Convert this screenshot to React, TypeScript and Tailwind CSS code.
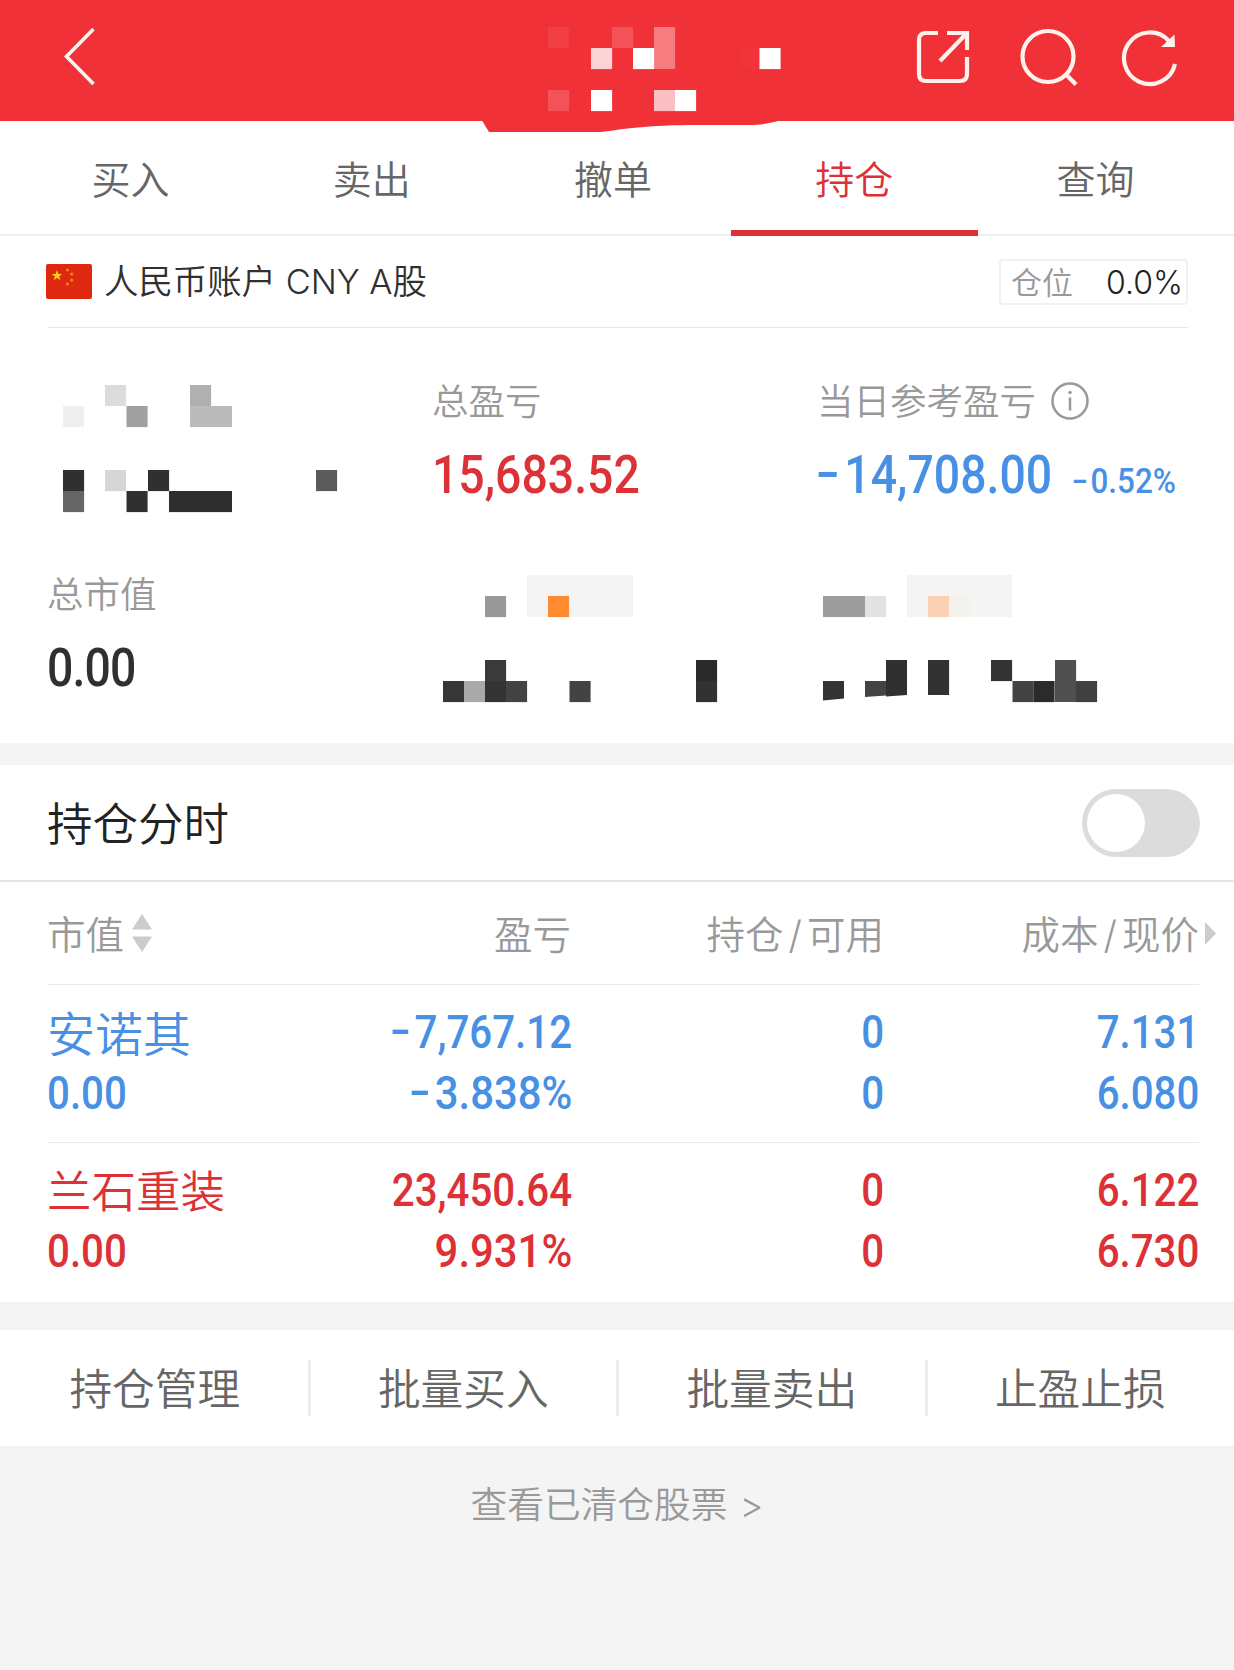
import { useState } from "react";
import clsx from "clsx";

type Tone = "red" | "blue";

interface Holding {
    name: string;
    nameClass: string;
    value: string;
    profit: string;
    profitRate: string;
    amount: string;
    available: string;
    cost: string;
    price: string;
    tone: Tone;
}

interface Cell {
    x: number;
    y: number;
    w?: number;
    h?: number;
    fill: string;
}

const TONES: Record<Tone, string> = {
    red: "text-[#dc3136]",
    blue: "text-[#4790e4]",
};

const TABS = ["买入", "卖出", "撤单", "持仓", "查询"];
const ACTIONS = ["持仓管理", "批量买入", "批量卖出", "止盈止损"];

const HOLDINGS: Holding[] = [
    {
        name: "安诺其",
        nameClass: "text-[48px]",
        value: "0.00",
        profit: "-7,767.12",
        profitRate: "-3.838%",
        amount: "0",
        available: "0",
        cost: "7.131",
        price: "6.080",
        tone: "blue",
    },
    {
        name: "兰石重装",
        nameClass: "text-[44.5px]",
        value: "0.00",
        profit: "23,450.64",
        profitRate: "9.931%",
        amount: "0",
        available: "0",
        cost: "6.122",
        price: "6.730",
        tone: "red",
    },
];

// Masked values are drawn as blocks of this size
const BLOCK = 21.1;

const TITLE_MASK: Cell[] = [
    { x: 66, y: 27, fill: "#f13f44" },
    { x: 130, y: 27, fill: "#f35358" },
    { x: 172, y: 27, h: 42, fill: "#f67c80" },
    { x: 109, y: 48, fill: "#fcd3d5" },
    { x: 151, y: 48, fill: "#ffffff" },
    { x: 257, y: 48, fill: "#f03439" },
    { x: 277.5, y: 48, fill: "#ffffff" },
    { x: 66, y: 90, fill: "#f35358" },
    { x: 109, y: 90, fill: "#ffffff" },
    { x: 172, y: 90, fill: "#fabfc3" },
    { x: 193, y: 90, fill: "#ffffff" },
];

const ASSET_MASK: Cell[] = [
    { x: 15, y: 31, fill: "#efefef" },
    { x: 57, y: 10, fill: "#dcdcdc" },
    { x: 78.5, y: 31, fill: "#a0a0a0" },
    { x: 142, y: 10, fill: "#b0b0b0" },
    { x: 142, y: 31, w: 42, fill: "#bbbbbb" },
    { x: 15, y: 95, fill: "#303030" },
    { x: 15, y: 116, fill: "#666666" },
    { x: 57, y: 95, fill: "#d6d6d6" },
    { x: 78.5, y: 116, fill: "#303030" },
    { x: 100, y: 95, fill: "#303030" },
    { x: 121, y: 116, w: 63, fill: "#2e2e2e" },
    { x: 268, y: 95, fill: "#5a5a5a" },
];

const AVAILABLE_MASK: Cell[] = [
    { x: 95, y: 7, w: 106, h: 42, fill: "#f4f4f4" },
    { x: 53, y: 28, fill: "#999999" },
    { x: 116, y: 28, fill: "#ff8a30" },
    { x: 11, y: 113, fill: "#363636" },
    { x: 32, y: 113, fill: "#a9a9a9" },
    { x: 53, y: 92, fill: "#3a3a3a" },
    { x: 53, y: 113, fill: "#343434" },
    { x: 74, y: 113, fill: "#434343" },
    { x: 137.5, y: 113, fill: "#434343" },
    { x: 264, y: 92, fill: "#2a2a2a" },
    { x: 264, y: 113, fill: "#323232" },
];

const CASH_MASK: Cell[] = [
    { x: 90, y: 7, w: 105, h: 42, fill: "#f4f4f4" },
    { x: 6, y: 28, w: 42, fill: "#9d9d9d" },
    { x: 48, y: 28, fill: "#e2e2e2" },
    { x: 111, y: 28, fill: "#fbd1b5" },
    { x: 132, y: 28, fill: "#f5f2ee" },
    { x: 111, y: 92, h: 35, fill: "#323232" },
    { x: 174, y: 92, fill: "#333333" },
    { x: 195.5, y: 113, fill: "#434343" },
    { x: 216.5, y: 113, fill: "#2b2b2b" },
    { x: 238, y: 92, h: 42, fill: "#505050" },
    { x: 259, y: 113, fill: "#404040" },
];

function Blocks({ cells }: { cells: Cell[] }) {
    return (
        <>
            {cells.map((c) => (
                <rect
                    key={`${c.x}-${c.y}`}
                    x={c.x}
                    y={c.y}
                    width={c.w ?? BLOCK}
                    height={c.h ?? BLOCK}
                    fill={c.fill}
                />
            ))}
        </>
    );
}

interface NumProps {
    children: string;
    className?: string;
    right?: boolean;
}

// Narrow figures with a wide leading minus
function Num({ children, className, right }: NumProps) {
    const negative = children.startsWith("-");
    return (
        <span
            className={clsx(
                "inline-block whitespace-nowrap font-['Roboto'] font-medium leading-none",
                right ? "origin-right" : "origin-left",
                children.endsWith("%") ? "scale-x-[0.91]" : "scale-x-[0.875]",
                className
            )}
        >
            {negative && (
                <span className="ml-[0.16em] mr-[0.09em] inline-block origin-right -translate-y-[0.04em] scale-x-150">-</span>
            )}
            {negative ? children.slice(1) : children}
        </span>
    );
}

function Header() {
    return (
        <header className="flex h-[121px] items-start bg-[#f03137]">
            <svg className="ml-[60px] h-[121px] w-10 shrink-0" viewBox="0 0 40 121" fill="none">
                <path d="M33.5 29 6.5 56.5l27 27.5" stroke="#fff4ec" strokeWidth="3.6" />
            </svg>
            <svg className="relative ml-[382px] h-[133px] w-[300px] shrink-0" viewBox="0 0 300 133">
                <path d="M0 120.5 7 132h112c18-2 36-6.500 90-7h58c15 0 20-2 31-4.500Z" fill="#f03137" />
                <Blocks cells={TITLE_MASK} />
            </svg>
            <div className="ml-auto mr-[55px] flex h-[114px] items-center gap-[41px]">
                <svg className="mr-[3px] size-[60px]" viewBox="0 0 60 60" fill="none" stroke="#fff1ec" strokeWidth="4.200">
                    <path d="M26 6H14q-7 0-7 7v34q0 7 7 7h34q7 0 7-7V30" />
                    <path d="M35 6h20v17" />
                    <path d="M28 34 54 7" />
                </svg>
                <svg className="size-[62px]" viewBox="0 0 62 62" fill="none" stroke="#fff1ec" strokeWidth="4.200">
                    <circle cx="32" cy="30.500" r="25.500" />
                    <path d="m49 47.500 11 11" />
                </svg>
                <svg className="size-[60px]" viewBox="0 0 60 60" fill="none" stroke="#fff1ec" strokeWidth="4.200">
                    <path d="M56 37A25.800 25.800 0 1 1 50 14" />
                    <path d="m55.500 7.500.5 12.500H42Z" fill="#fff1ec" stroke="none" />
                </svg>
            </div>
        </header>
    );
}

function Flag() {
    return (
        <svg className="h-[35px] w-[46px]" viewBox="0 0 46 35">
            <rect width="46" height="35" rx="2" fill="#de2910" />
            <path
                d="m11 6 1.300 3.900h4.100l-3.300 2.400 1.300 3.900-3.400-2.400-3.300 2.400 1.200-3.900-3.300-2.400h4.100Z"
                fill="#ffd21a"
            />
            <g fill="#f2841c">
                <circle cx="21.500" cy="6" r="1.600" />
                <circle cx="25.700" cy="10" r="1.600" />
                <circle cx="25.700" cy="16" r="1.600" />
                <circle cx="21.500" cy="20" r="1.600" />
            </g>
        </svg>
    );
}

function InfoIcon() {
    return (
        <svg className="-mt-[3px] ml-[14px] size-10" viewBox="0 0 40 40" fill="none" stroke="#999" strokeWidth="2.500">
            <circle cx="20" cy="20" r="17.500" />
            <path d="M20 16.500V29.500" />
            <circle cx="20" cy="11.500" r="1.700" fill="#999" stroke="none" />
        </svg>
    );
}

function Account() {
    return (
        <section className="h-[507px] bg-white">
            <div className="ml-[46px] mr-[46px] flex h-[91px] items-center">
                <Flag />
                <span className="ml-3 flex-1 whitespace-pre pt-0.5 text-[34.4px] text-[#303030]">人民币账户 CNY A股</span>
                <div className="flex h-[46px] w-[189px] items-center justify-between rounded border-2 border-[#f1f1f1] pl-[10px] pr-[3px]">
                    <span className="pt-0.5 text-[31px] text-[#999]">仓位</span>
                    <span className="pt-0.5 text-[32px] text-[#222]">0.0%</span>
                </div>
            </div>
            <div className="mx-[46px] ml-12 h-px bg-[#e6e6e6]" />

            <div className="ml-12 mt-[47px] grid grid-cols-[384px_385px_1fr] gap-y-[45px]">
                <svg className="h-[148px] w-[300px]" viewBox="0 0 300 148">
                    <Blocks cells={ASSET_MASK} />
                </svg>
                <div>
                    <div className="flex h-[50px] items-center pt-[5px] text-[36.5px] text-[#999]">总盈亏</div>
                    <div className="flex h-[98px] items-center pt-0.5 text-[#dc3136]">
                        <Num className="text-[53px]">15,683.52</Num>
                    </div>
                </div>
                <div>
                    <div className="flex h-[50px] items-center pt-[5px] text-[36.5px] text-[#999]">
                        当日参考盈亏
                        <InfoIcon />
                    </div>
                    <div className="flex h-[98px] items-center pt-0.5 text-[#4790e4]">
                        <Num className="w-[255px] text-[53px]">-14,708.00</Num>
                        <Num className="mt-3 text-[34.5px]">-0.52%</Num>
                    </div>
                </div>
                <div>
                    <div className="-ml-px flex h-[50px] items-center pt-[5px] text-[36.5px] text-[#999]">总市值</div>
                    <div className="flex h-[98px] items-center pt-0.5 text-[#303030]">
                        <Num className="-ml-px text-[53px] tracking-[-1px]">0.00</Num>
                    </div>
                </div>
                <svg className="h-[148px] w-[300px]" viewBox="0 0 300 148">
                    <Blocks cells={AVAILABLE_MASK} />
                </svg>
                <svg className="h-[148px] w-[300px]" viewBox="0 0 300 148">
                    <Blocks cells={CASH_MASK} />
                    <path d="M6 113h21v17.500L6 132.500Z" fill="#333" />
                    <path d="M48 113h21v14.500l-21 1.500Z" fill="#434343" />
                    <path d="M69 92h21v35l-21 1.500Z" fill="#303030" />
                </svg>
            </div>
        </section>
    );
}

function HoldingRow({ h }: { h: Holding }) {
    return (
        <div
            className={clsx(
                "ml-12 mr-[35px] grid h-[158px] grid-cols-[1fr_300px_312px_315px] border-t border-[#ebebeb] pt-[16px]",
                TONES[h.tone]
            )}
        >
            <div>
                <div className={clsx("-ml-px flex h-[63px] items-center whitespace-nowrap pt-1", h.nameClass)}>{h.name}</div>
                <div className="flex h-[58px] items-center">
                    <Num className="-ml-px text-[46px]">{h.value}</Num>
                </div>
            </div>
            {[
                [h.profit, h.profitRate],
                [h.amount, h.available],
                [h.cost, h.price],
            ].map(([top, bottom], i) => (
                <div key={i} className="text-[46px]">
                    <div className="flex h-[61px] items-center justify-end">
                        <Num right>{top}</Num>
                    </div>
                    <div className="flex h-[61px] items-center justify-end">
                        <Num right>{bottom}</Num>
                    </div>
                </div>
            ))}
        </div>
    );
}

export default function App() {
    const [tab, setTab] = useState("持仓");
    const [chartOn, setChartOn] = useState(false);

    return (
        <div className="h-[1670px] w-[1234px] overflow-hidden bg-[#f4f4f4] font-['Inter','Noto_Sans_CJK_SC',sans-serif] font-[350] leading-none">
            <Header />

            <nav className="flex h-[115px] border-b-2 border-[#efefef] bg-white pl-[10px] pr-[18px]">
                {TABS.map((t) => (
                    <button
                        key={t}
                        onClick={() => setTab(t)}
                        className={clsx(
                            "relative flex-1 pt-1 text-[39px]",
                            t === tab ? "text-[#dc3136]" : "text-[#666]"
                        )}
                    >
                        {t}
                        {t === tab && <span className="absolute -inset-x-[3px] -bottom-0.5 h-1.5 bg-[#dc3136]" />}
                    </button>
                ))}
            </nav>

            <Account />

            <section className="mt-[22px] bg-white pb-0.5">
                <div className="flex h-[117px] items-center justify-between border-b-2 border-[#e6e6e6] pl-[47px] pr-[34px]">
                    <h2 className="pt-[5px] text-[45.5px] text-[#222]">持仓分时</h2>
                    <button
                        role="switch"
                        aria-checked={chartOn}
                        onClick={() => setChartOn(!chartOn)}
                        className={clsx(
                            "mt-px flex h-[68px] w-[118px] items-center rounded-full px-[5px]",
                            chartOn ? "justify-end bg-[#dc3136]" : "bg-[#dcdcdc]"
                        )}
                    >
                        <span className="size-[58px] rounded-full bg-white" />
                    </button>
                </div>

                <div className="ml-[47px] grid h-[102px] grid-cols-[224px_300px_313px_315px_35px] items-center text-[38.5px] text-[#999]">
                    <div className="flex items-center">
                        <span className="pt-1">市值</span>
                        <svg className="ml-[8px] h-[38px] w-5" viewBox="0 0 20 38" fill="#ccc">
                            <path d="M10 0 20 15.500H0ZM10 38 20 22.500H0Z" />
                        </svg>
                    </div>
                    <div className="pt-1 text-right">盈亏</div>
                    <div className="pt-1 text-right">
                        持仓<span className="mx-[5px]">/</span>可用
                    </div>
                    <div className="pt-1 text-right">
                        成本<span className="mx-[5px]">/</span>现价
                    </div>
                    <svg className="ml-[6px] h-[23px] w-[11px]" viewBox="0 0 11 23" fill="#ccc">
                        <path d="M0 0 11 11.500 0 23Z" />
                    </svg>
                </div>

                {HOLDINGS.map((h) => (
                    <HoldingRow key={h.name} h={h} />
                ))}
            </section>

            <section className="mt-7 grid h-[116px] grid-cols-4 items-center bg-white">
                {ACTIONS.map((a) => (
                    <button
                        key={a}
                        className="relative left-0.5 h-14 border-r-[3px] border-[#ececec] pt-1 text-[42.7px] text-[#666] last:border-transparent"
                    >
                        {a}
                    </button>
                ))}
            </section>

            <footer className="flex h-[119px] items-center justify-center gap-3 text-[36.7px] text-[#999]">
                <span>查看已清仓股票</span>
                <span>&gt;</span>
            </footer>
        </div>
    );
}
